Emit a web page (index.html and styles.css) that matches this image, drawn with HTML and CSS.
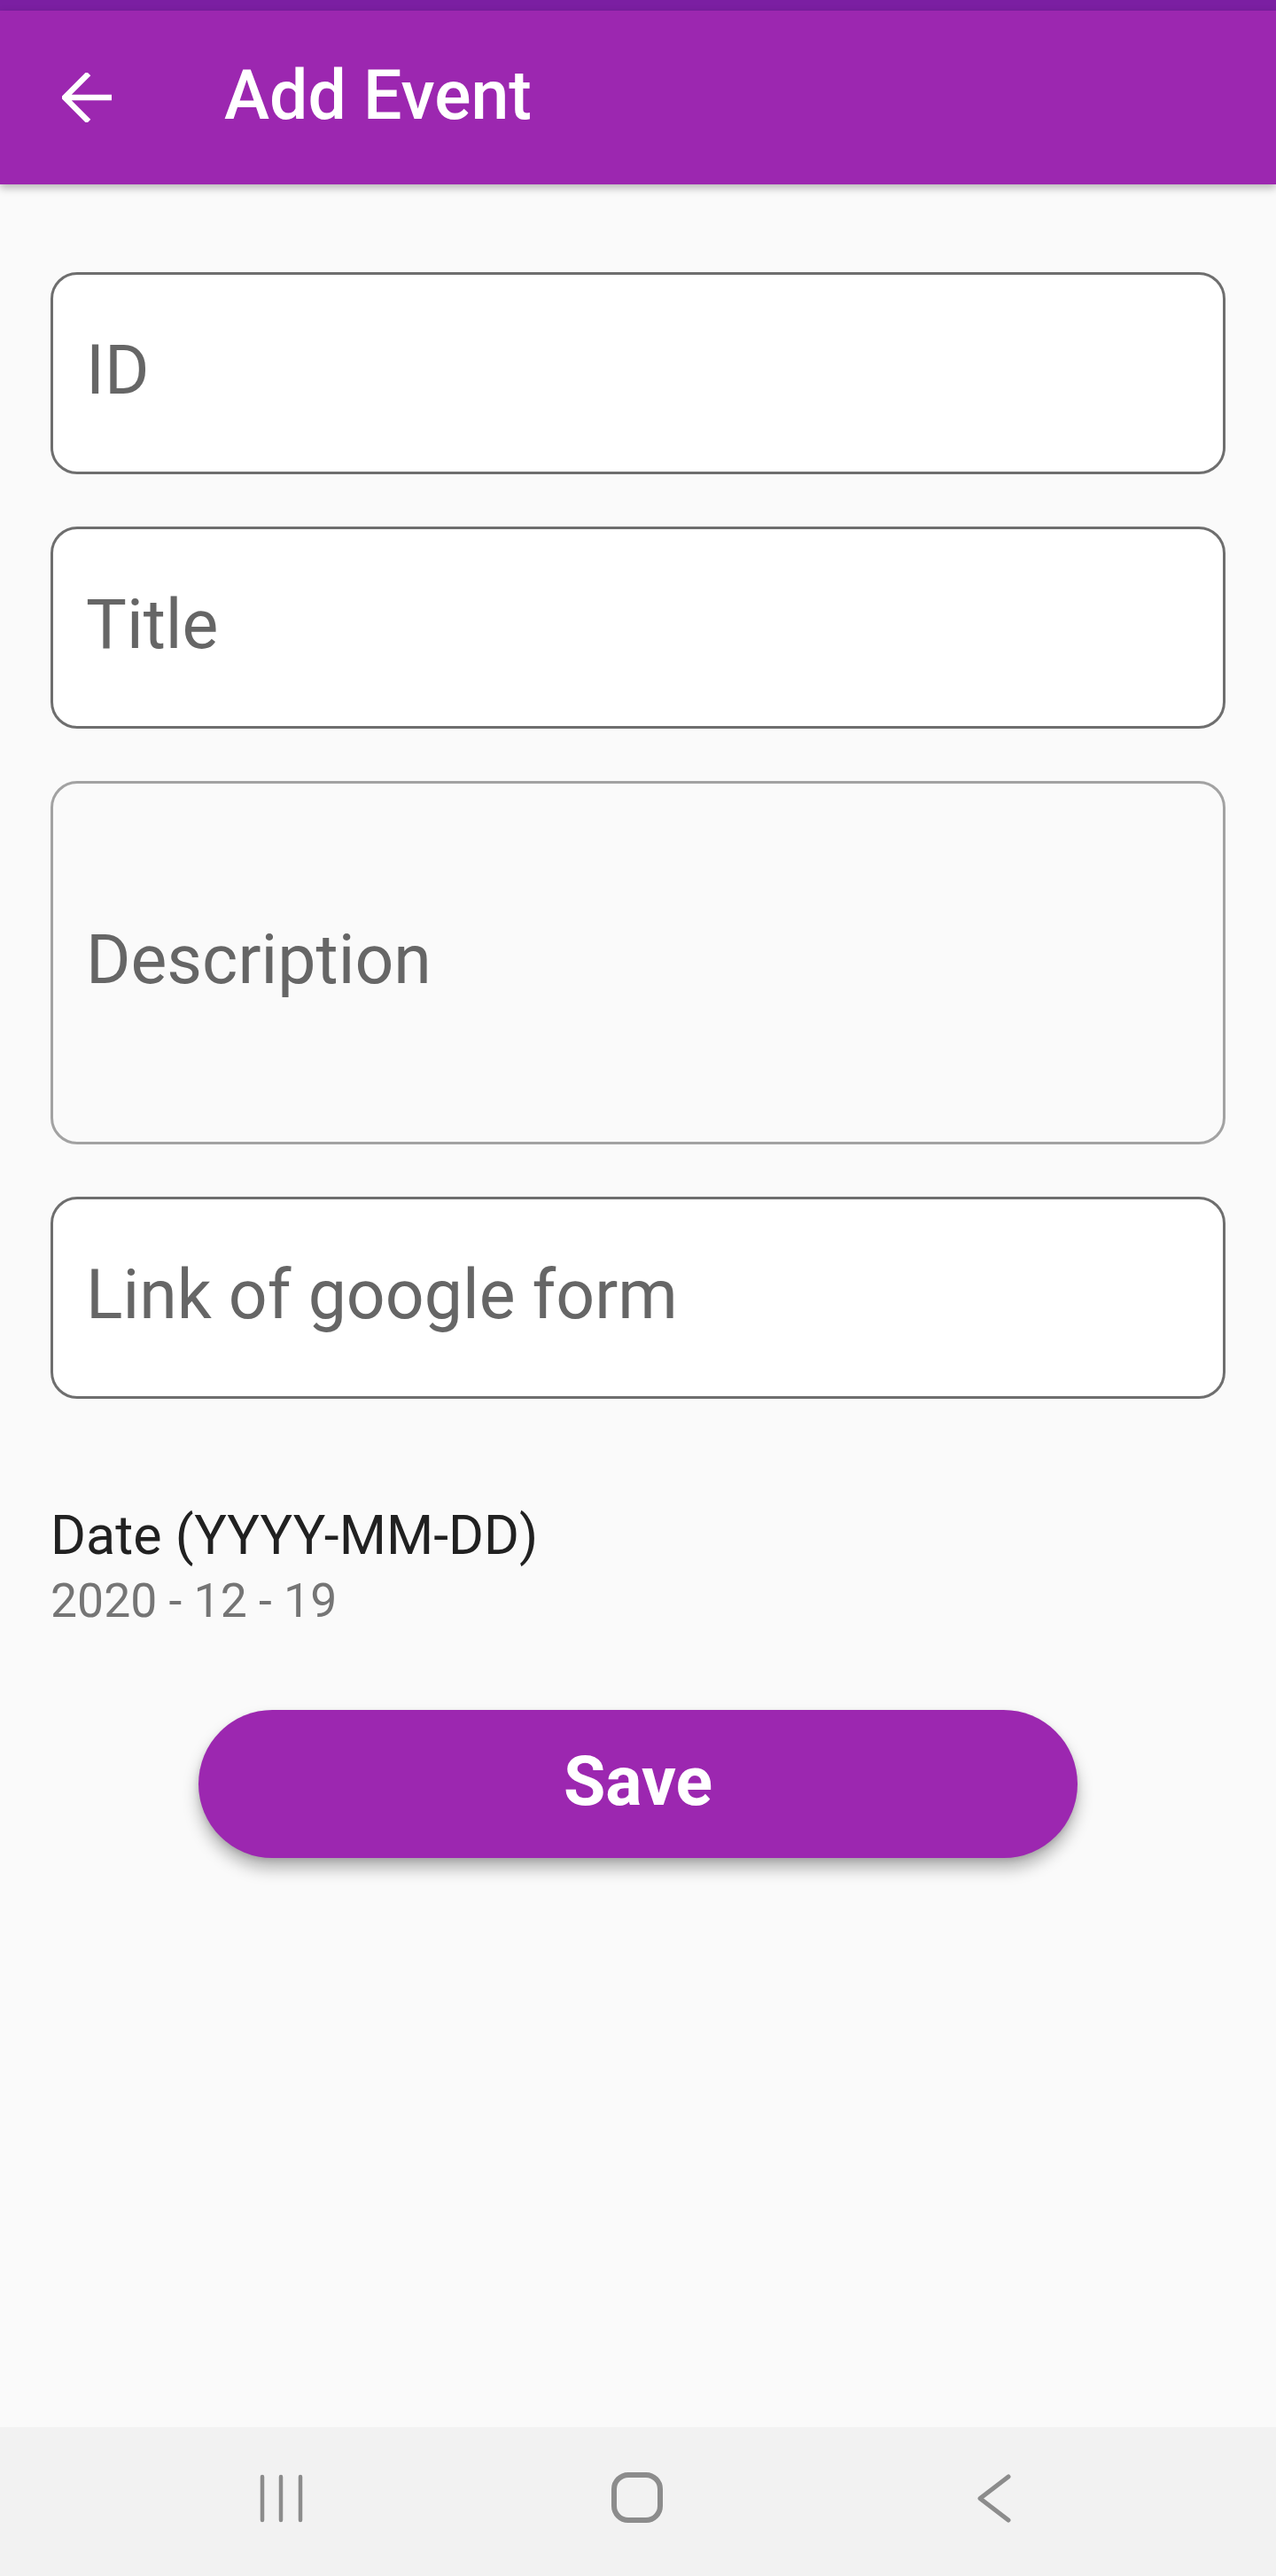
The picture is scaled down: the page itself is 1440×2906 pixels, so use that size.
FILE: index.html
```html
<!DOCTYPE html>
<html lang="en">
<head>
<meta charset="utf-8">
<title>Add Event</title>
<link rel="stylesheet" href="styles.css">
</head>
<body>
<div class="screen">
  <div class="status-bar"></div>
  <header class="app-bar">
    <svg class="back" width="56" height="56" viewBox="0 0 56 56" aria-hidden="true">
      <path d="M56 28H3M30 1L3 28L30 55" fill="none" stroke="#fff" stroke-width="6.5" stroke-linejoin="miter"/>
    </svg>
    <h1 class="title">Add Event</h1>
  </header>
  <main class="content">
    <div class="field field-white"><span class="placeholder">ID</span></div>
    <div class="field field-white"><span class="placeholder">Title</span></div>
    <div class="field field-tall"><span class="placeholder">Description</span></div>
    <div class="field field-white"><span class="placeholder">Link of google form</span></div>
    <div class="date-label">Date (YYYY-MM-DD)</div>
    <div class="date-value">2020 - 12 - 19</div>
    <div class="actions"><button class="save">Save</button></div>
  </main>
  <nav class="nav-bar">
    <svg width="60" height="60" viewBox="0 0 60 60" aria-hidden="true">
      <g stroke="#8c8c8c" stroke-width="4.5" stroke-linecap="round">
        <path d="M8 7V56M29 7V56M51 7V56"/>
      </g>
    </svg>
    <svg width="60" height="60" viewBox="0 0 60 60" aria-hidden="true">
      <rect x="3" y="5" width="52" height="51" rx="16" fill="none" stroke="#8c8c8c" stroke-width="6"/>
    </svg>
    <svg width="60" height="60" viewBox="0 0 60 60" aria-hidden="true">
      <path d="M46 7L14 31.5L46 56" fill="none" stroke="#8c8c8c" stroke-width="5" stroke-linecap="round" stroke-linejoin="round"/>
    </svg>
  </nav>
</div>
</body>
</html>
```
FILE: styles.css
```css
html, body {
  margin: 0;
  padding: 0;
}
body {
  background: #fafafa;
  font-family: Roboto, "Noto Sans", "Liberation Sans", sans-serif;
}
.screen {
  width: 1440px;
  height: 2906px;
  display: flex;
  flex-direction: column;
  overflow: hidden;
}
.status-bar {
  height: 12px;
  background: #7b1fa2;
  flex: none;
}
.app-bar {
  position: relative;
  z-index: 2;
  height: 196px;
  flex: none;
  background: #9c27b0;
  display: flex;
  align-items: center;
  padding-left: 70px;
  box-shadow: 0 4px 9px rgba(0, 0, 0, 0.28);
}
.back {
  flex: none;
  margin-right: 127px;
}
.title {
  margin: 0;
  color: #fff;
  font-weight: 500;
  font-size: 77px;
  line-height: 1;
  position: relative;
  top: -2px;
}
.content {
  flex: 1;
  padding: 99px 57px 0;
  display: flex;
  flex-direction: column;
}
.field {
  box-sizing: border-box;
  height: 228px;
  border: 3px solid #6e6e6e;
  border-radius: 30px;
  display: flex;
  align-items: center;
  padding-left: 37px;
  margin-bottom: 59px;
}
.field-white {
  background: #fff;
}
.field-tall {
  height: 410px;
  background: #fafafa;
  border-color: #a2a2a2;
}
.placeholder {
  color: #666;
  font-size: 77px;
  line-height: 1;
  position: relative;
  top: -3px;
}
.date-label {
  margin-top: 60px;
  color: #212121;
  font-size: 61px;
  line-height: 1.172;
}
.date-value {
  margin-top: 7px;
  color: #757575;
  font-size: 53.5px;
  line-height: 1.172;
}
.actions {
  margin-top: 91px;
  display: flex;
  justify-content: center;
}
.save {
  width: 992px;
  height: 167px;
  border: none;
  border-radius: 84px;
  background: #9c27b0;
  color: #fff;
  font-family: Roboto, "Noto Sans", sans-serif;
  font-weight: 700;
  font-size: 77px;
  line-height: 1;
  box-shadow: 0 12px 18px rgba(0, 0, 0, 0.28), 0 3px 6px rgba(0, 0, 0, 0.12);
  padding: 0 0 4px;
}
.nav-bar {
  height: 168px;
  flex: none;
  background: #f2f2f2;
  display: flex;
  align-items: center;
  justify-content: center;
  gap: 342px;
  padding-bottom: 10px;
  box-sizing: border-box;
}
```
